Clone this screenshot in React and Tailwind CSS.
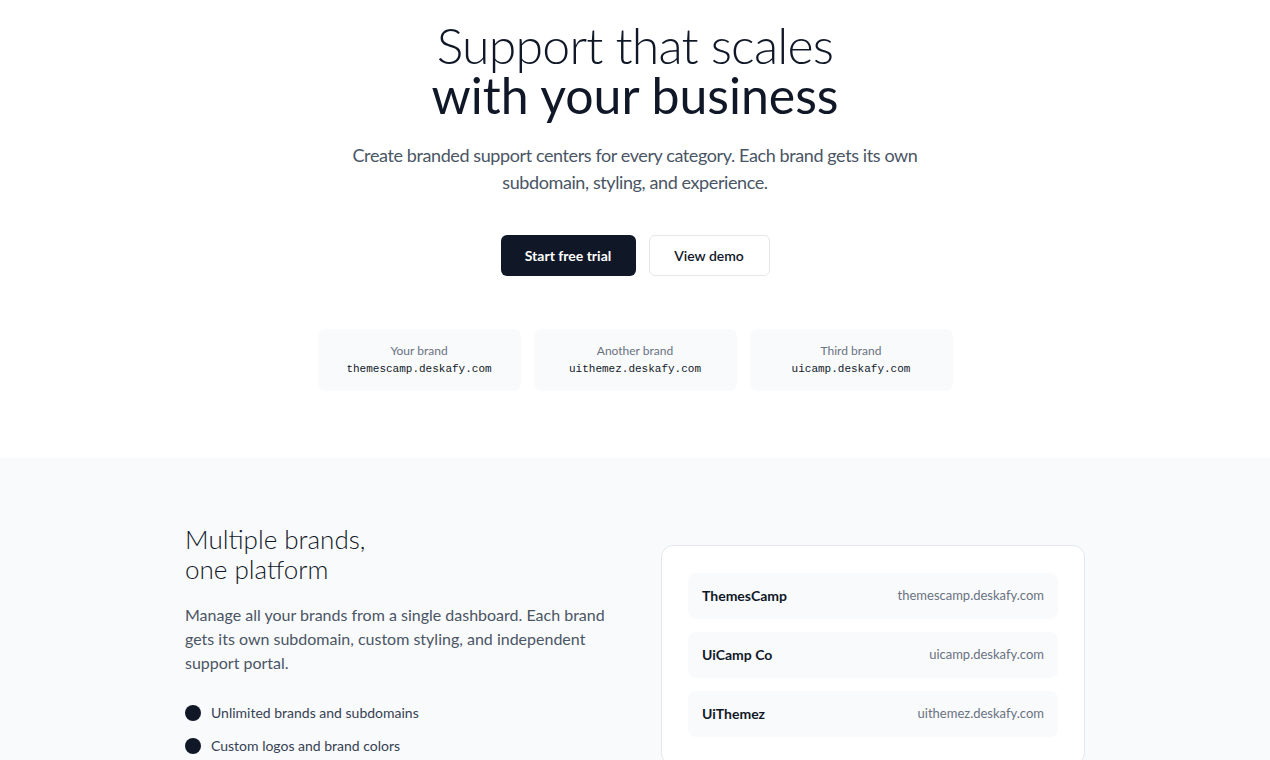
import React from "react";

const BRANDS = [
  { label: "Your brand", domain: "themescamp.deskafy.com" },
  { label: "Another brand", domain: "uithemez.deskafy.com" },
  { label: "Third brand", domain: "uicamp.deskafy.com" },
];

const PORTALS = [
  { name: "ThemesCamp", domain: "themescamp.deskafy.com" },
  { name: "UiCamp Co", domain: "uicamp.deskafy.com" },
  { name: "UiThemez", domain: "uithemez.deskafy.com" },
];

const FEATURES = ["Unlimited brands and subdomains", "Custom logos and brand colors"];

export default function App() {
  return (
    <div className="min-h-screen bg-white text-gray-900 font-['Lato',sans-serif]">
      {/* hero */}
      <section className="pt-[20px] pb-[67px] flex flex-col items-center text-center">
        <h1 className="text-[50px] leading-[50px] text-gray-900">
          <span className="block font-light tracking-[-0.8px]">Support that scales</span>
          <span className="block font-normal">with your business</span>
        </h1>
        <p className="mt-[22px] max-w-[580px] text-lg leading-[27px] tracking-[-0.4px] text-gray-600">
          Create branded support centers for every category. Each brand gets its own subdomain, styling, and experience.
        </p>
        <div className="mt-[39px] flex gap-[13px]">
          <button className="h-[41px] w-[135px] rounded-md bg-gray-900 text-sm font-bold text-white">
            Start free trial
          </button>
          <button className="h-[41px] w-[121px] rounded-md border border-gray-200 bg-white text-sm font-semibold text-gray-900">
            View demo
          </button>
        </div>
        <div className="mt-[53px] grid w-[635px] grid-cols-3 gap-[13px]">
          {BRANDS.map((b) => (
            <div key={b.label} className="rounded-lg bg-gray-50 py-3.5">
              <div className="text-xs leading-4 text-gray-500">{b.label}</div>
              <div className="mt-0.5 font-['Liberation_Mono',monospace] text-[11px] leading-4 text-gray-900">
                {b.domain}
              </div>
            </div>
          ))}
        </div>
      </section>

      {/* multi brand */}
      <section className="bg-gray-50 pt-[66px] pb-16">
        <div className="mx-auto grid max-w-[900px] grid-cols-2 gap-[52px]">
          <div>
            <h2 className="text-[26px] leading-[30px] font-light text-gray-900">
              Multiple brands,
              <br />
              one platform
            </h2>
            <p className="mt-[19px] text-base leading-6 text-gray-600">
              Manage all your brands from a single dashboard. Each brand gets its own subdomain, custom styling, and independent support portal.
            </p>
            <ul className="mt-[28px] space-y-[13px]">
              {FEATURES.map((f) => (
                <li key={f} className="flex items-center gap-2.5 text-sm leading-5 text-gray-700">
                  <span className="h-4 w-4 shrink-0 rounded-full bg-gray-900" />
                  {f}
                </li>
              ))}
            </ul>
          </div>
          <div className="mt-[21px] rounded-xl border border-gray-200 bg-white px-[26px] py-[27px]">
            <div className="space-y-[13px]">
              {PORTALS.map((p) => (
                <div key={p.name} className="flex h-[46px] items-center justify-between rounded-lg bg-gray-50 px-3.5">
                  <span className="text-sm font-bold text-gray-900">{p.name}</span>
                  <span className="text-[13px] text-gray-500">{p.domain}</span>
                </div>
              ))}
            </div>
          </div>
        </div>
      </section>
    </div>
  );
}
